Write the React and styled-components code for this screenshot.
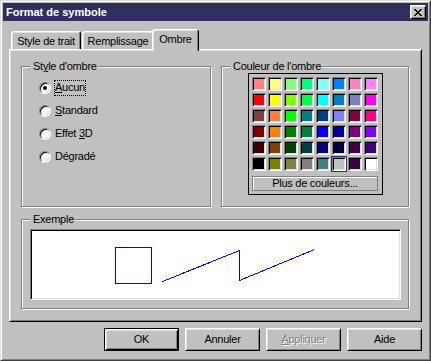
import styled, { createGlobalStyle, css } from "styled-components";

const SHADOW_COLORS = [
  ["#ff8080", "#ffff80", "#80ff80", "#00ff80", "#80ffff", "#0080ff", "#ff80c0", "#ff80ff"],
  ["#ff0000", "#ffff00", "#80ff00", "#00ff40", "#00ffff", "#0080c0", "#8080c0", "#ff00ff"],
  ["#804040", "#ff8040", "#00ff00", "#008080", "#004080", "#8080ff", "#800040", "#ff0080"],
  ["#800000", "#ff8000", "#008000", "#008040", "#0000ff", "#0000a0", "#800080", "#8000ff"],
  ["#400000", "#804000", "#004000", "#004040", "#000080", "#000040", "#400040", "#400080"],
  ["#000000", "#808000", "#808040", "#808080", "#408080", "#c0c0c0", "#400040", "#ffffff"],
];

const SELECTED_COLOR = "5-5";

const TABS = [
  { label: "Style de trait", width: 70 },
  { label: "Remplissage", width: 72 },
  { label: "Ombre", width: 47, active: true },
];

const SHADOW_STYLES = [
  { key: "aucun", label: "Aucun", mnemonic: 0, checked: true },
  { key: "standard", label: "Standard", mnemonic: 0 },
  { key: "3d", label: "Effet 3D", mnemonic: 6 },
  { key: "degrade", label: "Dégradé", mnemonic: -1 },
];

const GlobalStyle = createGlobalStyle`
  html, body {
    margin: 0;
    padding: 0;
    background: #c0c0c0;
  }
  body {
    font-family: "Liberation Sans", Arial, sans-serif;
    font-size: 11px;
    letter-spacing: -0.25px;
    color: #000;
  }
`;

const Window = styled.div`
  width: 431px;
  height: 361px;
  box-sizing: border-box;
  border: 1px solid;
  border-color: #dfdfdf #404040 #404040 #dfdfdf;
  box-shadow: inset 1px 1px #fff, inset -1px -1px #808080;
  padding: 2px;
  background: #c0c0c0;
  display: flex;
  flex-direction: column;
`;

const TitleBar = styled.div`
  height: 18px;
  display: flex;
  align-items: center;
  justify-content: space-between;
  padding: 0 2px 0 3px;
  background: #30305f;
  color: #fff;
  font-weight: bold;
  letter-spacing: 0;
  line-height: 13px;
`;

const CloseButton = styled.div`
  width: 16px;
  height: 14px;
  box-sizing: border-box;
  border: 1px solid;
  border-color: #fff #000 #000 #fff;
  box-shadow: inset 1px 1px #dfdfdf, inset -1px -1px #808080;
  background: #c0c0c0;
  display: flex;
  align-items: center;
  justify-content: center;
`;

const Body = styled.div`
  flex: 1;
  display: flex;
  flex-direction: column;
  padding: 8px 6px 7px;
`;

const TabStrip = styled.div`
  height: 20px;
  display: flex;
  align-items: flex-end;
  padding-left: 2px;
  position: relative;
  z-index: 1;
`;

const Tab = styled.div`
  position: relative;
  width: ${({ $width }) => $width}px;
  height: 18px;
  box-sizing: border-box;
  border: 1px solid;
  border-bottom: none;
  border-color: #fff #000 transparent #fff;
  border-radius: 3px 3px 0 0;
  box-shadow: inset 1px 1px #dfdfdf, inset -1px 0 #808080;
  background: #c0c0c0;
  padding-top: 3px;
  line-height: 13px;
  text-align: center;
  white-space: nowrap;
  & + & {
    margin-left: 1px;
  }
  ${({ $active }) =>
    $active &&
    css`
      height: 22px;
      margin: 0 -2px -2px;
      z-index: 2;
      && {
        margin-left: -2px;
      }
    `}
`;

const Panel = styled.div`
  height: 273px;
  box-sizing: border-box;
  border: 1px solid;
  border-color: #fff #000 #000 #fff;
  box-shadow: inset 1px 1px #dfdfdf, inset -1px -1px #808080;
  padding: 16px 0 0 11px;
  display: flex;
  flex-direction: column;
`;

const GroupRow = styled.div`
  display: flex;
  gap: 10px;
`;

const Group = styled.div`
  position: relative;
  box-sizing: border-box;
  width: ${({ $width }) => $width}px;
  height: ${({ $height }) => $height}px;
  border: 1px solid #808080;
  box-shadow: inset 1px 1px #fff, 1px 1px #fff;
`;

const Legend = styled.span`
  position: absolute;
  top: -7px;
  left: 8px;
  padding: 0 2px 0 3px;
  background: #c0c0c0;
  line-height: 13px;
  white-space: nowrap;
`;

const RadioList = styled.div`
  display: flex;
  flex-direction: column;
  padding: 9px 0 0 17px;
`;

const RadioRow = styled.div`
  height: 23px;
  display: flex;
  align-items: center;
`;

const RadioCircle = styled.span`
  width: 12px;
  height: 12px;
  box-sizing: border-box;
  border-radius: 50%;
  border: 1px solid;
  border-color: #808080 #fff #fff #808080;
  box-shadow: inset 1px 1px #000, inset -1px -1px #dfdfdf;
  background: #fff;
  display: flex;
  align-items: center;
  justify-content: center;
  &::after {
    content: "";
    width: 4px;
    height: 4px;
    border-radius: 50%;
    background: ${({ $checked }) => ($checked ? "#000" : "transparent")};
  }
`;

const RadioLabel = styled.span`
  margin-left: 3px;
  line-height: 13px;
  padding-bottom: 1px;
  border: 1px dotted ${({ $focused }) => ($focused ? "#000" : "transparent")};
`;

const Mnemonic = styled.u`
  text-decoration-thickness: 1px;
  text-underline-offset: 1px;
`;

const ColorArea = styled.div`
  padding: 6px 0 0 26px;
`;

const ColorBox = styled.div`
  display: inline-flex;
  flex-direction: column;
  border: 1px solid #000;
  padding: 3px 4px 3px 3px;
`;

const ColorGrid = styled.div`
  display: grid;
  grid-template-columns: repeat(8, 14px);
  grid-auto-rows: 14px;
  gap: 2px;
`;

const ColorCell = styled.div`
  box-sizing: border-box;
  border: 1px solid;
  border-color: #808080 #fff #fff #808080;
  box-shadow: inset 1px 1px #000, inset -1px -1px #dfdfdf;
  background: ${({ $color }) => $color};
  outline: ${({ $selected }) => ($selected ? "1px solid #30305f" : "none")};
`;

const MoreButton = styled.div`
  margin-top: 5px;
  height: 15px;
  box-sizing: border-box;
  border: 1px solid #808080;
  box-shadow: inset 1px 1px #fff;
  line-height: 13px;
  text-align: center;
`;

const SampleGroup = styled(Group)`
  margin-top: 12px;
  padding: 9px 7px 8px 8px;
`;

const SampleBox = styled.div`
  height: 71px;
  box-sizing: border-box;
  border: 1px solid;
  border-color: #808080 #fff #fff #808080;
  box-shadow: inset 1px 1px #000, inset -1px -1px #dfdfdf;
  background: #fff;
  padding: 1px;
  svg {
    display: block;
  }
`;

const Footer = styled.div`
  display: flex;
  justify-content: flex-end;
  gap: 6px;
  margin-top: 6px;
`;

const Button = styled.button`
  width: 75px;
  height: 23px;
  box-sizing: border-box;
  padding: 0;
  margin: 0;
  font: inherit;
  letter-spacing: inherit;
  line-height: 13px;
  color: ${({ disabled }) => (disabled ? "#808080" : "#000")};
  text-shadow: ${({ disabled }) => (disabled ? "1px 1px #fff" : "none")};
  background: #c0c0c0;
  border: 1px solid;
  border-color: #fff #000 #000 #fff;
  box-shadow: inset 1px 1px #dfdfdf, inset -1px -1px #808080;
  ${({ $default }) =>
    $default &&
    css`
      border-color: #000;
      box-shadow: inset 1px 1px #fff, inset -1px -1px #000,
        inset 2px 2px #dfdfdf, inset -2px -2px #808080;
    `}
`;

const CloseGlyph = () => (
  <svg width="8" height="7" viewBox="0 0 8 7" shapeRendering="crispEdges">
    <path
      d="M0 0h2v1h-2zM6 0h2v1h-2zM1 1h2v1h-2zM5 1h2v1h-2zM2 2h4v1h-4zM3 3h2v1h-2zM2 4h4v1h-4zM1 5h2v1h-2zM5 5h2v1h-2zM0 6h2v1h-2zM6 6h2v1h-2z"
      fill="#000"
    />
  </svg>
);

const withMnemonic = (label, idx) =>
  idx < 0 ? (
    label
  ) : (
    <>
      {label.slice(0, idx)}
      <Mnemonic>{label[idx]}</Mnemonic>
      {label.slice(idx + 1)}
    </>
  );

const App = () => {
  return (
    <>
      <GlobalStyle />
      <Window>
        <TitleBar>
          <span>Format de symbole</span>
          <CloseButton>
            <CloseGlyph />
          </CloseButton>
        </TitleBar>
        <Body>
          <TabStrip>
            {TABS.map((tab) => (
              <Tab key={tab.label} $width={tab.width} $active={tab.active}>
                {tab.label}
              </Tab>
            ))}
          </TabStrip>
          <Panel>
            <GroupRow>
              <Group $width={190} $height={141}>
                <Legend>{withMnemonic("Style d'ombre", 2)}</Legend>
                <RadioList>
                  {SHADOW_STYLES.map((opt) => (
                    <RadioRow key={opt.key}>
                      <RadioCircle $checked={opt.checked} />
                      <RadioLabel $focused={opt.checked}>
                        {withMnemonic(opt.label, opt.mnemonic)}
                      </RadioLabel>
                    </RadioRow>
                  ))}
                </RadioList>
              </Group>
              <Group $width={188} $height={141}>
                <Legend>Couleur de l'ombre</Legend>
                <ColorArea>
                  <ColorBox>
                    <ColorGrid>
                      {SHADOW_COLORS.map((row, r) =>
                        row.map((color, c) => (
                          <ColorCell
                            key={`${r}-${c}`}
                            $color={color}
                            $selected={`${r}-${c}` === SELECTED_COLOR}
                          />
                        ))
                      )}
                    </ColorGrid>
                    <MoreButton>Plus de couleurs...</MoreButton>
                  </ColorBox>
                </ColorArea>
              </Group>
            </GroupRow>
            <SampleGroup $width={388} $height={90}>
              <Legend>Exemple</Legend>
              <SampleBox>
                <svg width="367" height="67" shapeRendering="crispEdges">
                  <rect x="83.5" y="16.5" width="36" height="36" fill="none" stroke="#0000ff" />
                  <polyline
                    points="130.5,50.5 207.5,19.5 207.5,49.5 282.5,18.5"
                    fill="none"
                    stroke="#0000ff"
                  />
                </svg>
              </SampleBox>
            </SampleGroup>
          </Panel>
          <Footer>
            <Button $default>OK</Button>
            <Button>Annuler</Button>
            <Button disabled>{withMnemonic("Appliquer", 0)}</Button>
            <Button>Aide</Button>
          </Footer>
        </Body>
      </Window>
    </>
  );
};

export default App;
